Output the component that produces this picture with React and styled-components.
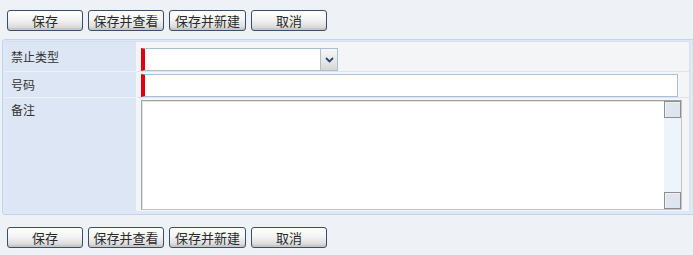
import React from "react";
import styled, { createGlobalStyle } from "styled-components";

const Global = createGlobalStyle`
  html, body { margin: 0; padding: 0; overflow: hidden; }
  body {
    background: #eef1f6;
    font-family: "Noto Sans CJK SC", "Noto Sans", sans-serif;
    color: #333;
  }
`;

const Page = styled.div`
  width: 693px;
  height: 255px;
  overflow: hidden;
`;

const Toolbar = styled.div`
  display: flex;
  gap: 5px;
  padding: ${(p) => (p.$bottom ? "12px 7px 0" : "10px 7px 8px")};
`;

const Button = styled.button`
  box-sizing: border-box;
  width: ${(p) => p.$w || 76}px;
  height: 21px;
  padding: 0;
  border: 1px solid #34506d;
  border-radius: 3px;
  background: linear-gradient(#ffffff 0%, #f4f4f4 45%, #e2e2e2 75%, #cfcfcf 100%);
  box-shadow: inset 0 -2px 0 #c8c8c8, inset 0 1px 0 #fff;
  font-family: "Noto Sans CJK SC", sans-serif;
  font-size: 13px;
  line-height: 19px;
  color: #2a2a2a;
  cursor: pointer;
`;

const Panel = styled.div`
  margin: 0 -8px 0 2px;
  border: 1px solid #c2d3ea;
  border-radius: 3px;
  background: #dfe8f6;
  padding: 1px 2px 3px 2px;
`;

const Table = styled.div`
  width: 684px;
  display: grid;
  grid-template-columns: 132px 1fr;
  border-top: 1px solid #d6dde8;
  border-right: 1px solid #dcdfe4;
`;

const Label = styled.div`
  box-sizing: border-box;
  height: ${(p) => p.$h}px;
  background: #dde6f5;
  border-right: 1px solid #f2f5fa;
  border-bottom: 1px solid ${(p) => (p.$last ? "transparent" : "#eef2f8")};
  font-size: 12px;
  color: #333;
  padding-left: 6px;
  display: flex;
  align-items: ${(p) => (p.$top ? "flex-start" : "center")};
  padding-top: ${(p) => (p.$top ? "3px" : "0")};
`;

const Cell = styled.div`
  box-sizing: border-box;
  height: ${(p) => p.$h}px;
  background: #f4f5f7;
  border-bottom: 1px solid ${(p) => (p.$last ? "transparent" : "#dfe2e7")};
  padding: ${(p) => p.$pad};
  display: flex;
  align-items: flex-start;
`;

const SelectBox = styled.div`
  box-sizing: border-box;
  width: 197px;
  height: 23px;
  background: #fff;
  border: 1px solid #a9bfd8;
  border-left: 4px solid #e0000f;
  display: flex;
  justify-content: flex-end;
`;

const DropBtn = styled.div`
  width: 17px;
  height: 100%;
  box-sizing: border-box;
  border-left: 1px solid #b5bcc6;
  background: linear-gradient(#f7f7f7, #e6e6e6 60%, #d6d6d6);
  display: flex;
  align-items: center;
  justify-content: center;
`;

const TextInput = styled.input`
  box-sizing: border-box;
  width: 537px;
  height: 23px;
  background: #fff;
  border: 1px solid #a6c0de;
  border-left: 4px solid #e0000f;
  outline: none;
  padding: 0 3px;
  font-family: "Noto Sans CJK SC", sans-serif;
  font-size: 12px;
`;

const AreaWrap = styled.div`
  box-sizing: border-box;
  width: 541px;
  height: 110px;
  border: 1px solid #a4a4a4;
  border-right-color: #c4c4c4;
  border-bottom-color: #c4c4c4;
  box-shadow: inset 1px 1px 0 #e2e2e2;
  background: #fff;
  display: flex;
`;

const Area = styled.textarea`
  flex: 1;
  border: none;
  outline: none;
  resize: none;
  background: transparent;
  font-family: "Noto Sans CJK SC", sans-serif;
  font-size: 12px;
`;

const ScrollBar = styled.div`
  width: 17px;
  background: #eef4fb;
  display: flex;
  flex-direction: column;
  justify-content: space-between;
`;

const ScrollBtn = styled.div`
  box-sizing: border-box;
  width: 17px;
  height: 17px;
  border: 1px solid #8e8e8e;
  background: #dfe5ee;
  box-shadow: inset 1px 1px 0 #eef2f7;
`;

const Buttons = ({ bottom }) => (
  <Toolbar $bottom={bottom}>
    <Button>保存</Button>
    <Button>保存并查看</Button>
    <Button $w={77}>保存并新建</Button>
    <Button>取消</Button>
  </Toolbar>
);

export default function App() {
  return (
    <Page>
      <Global />
      <Buttons />
      <Panel>
        <Table>
          <Label $h={30}>禁止类型</Label>
          <Cell $h={30} $pad="6px 0 0 4px">
            <SelectBox>
              <DropBtn>
                <svg width="9" height="6" viewBox="0 0 9 6">
                  <path d="M1 1 L4.5 4.5 L8 1" fill="none" stroke="#2c4670" strokeWidth="1.8" />
                </svg>
              </DropBtn>
            </SelectBox>
          </Cell>
          <Label $h={26}>号码</Label>
          <Cell $h={26} $pad="2px 0 0 4px">
            <TextInput />
          </Cell>
          <Label $h={113} $top $last>备注</Label>
          <Cell $h={113} $pad="2px 0 0 4px" $last>
            <AreaWrap>
              <Area />
              <ScrollBar>
                <ScrollBtn />
                <ScrollBtn />
              </ScrollBar>
            </AreaWrap>
          </Cell>
        </Table>
      </Panel>
      <Buttons bottom />
    </Page>
  );
}
